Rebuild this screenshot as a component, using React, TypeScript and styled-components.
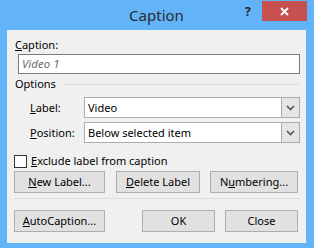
import React from "react";
import styled, { createGlobalStyle } from "styled-components";

const Global = createGlobalStyle`
  html, body { margin: 0; padding: 0; }
  body { width: 314px; height: 248px; overflow: hidden; font-family: "Segoe UI", "Noto Sans", "Open Sans", sans-serif; }
`;

const Window = styled.div`
  width: 314px;
  height: 248px;
  background: #63b3f9;
  display: flex;
  flex-direction: column;
  box-sizing: border-box;
  padding: 0 8px 5px 7px;
`;

const TitleBar = styled.div`
  height: 30px;
  position: relative;
  display: flex;
  align-items: flex-start;
  justify-content: center;
`;

const Title = styled.div`
  margin-top: 5px;
  margin-left: 0;
  font-family: "Segoe UI", "Noto Sans", sans-serif;
  font-size: 15px;
  color: #2b2b2b;
  line-height: 20px;
`;

const HelpMark = styled.div`
  position: absolute;
  left: 238px;
  top: 3px;
  font-family: "Noto Sans", sans-serif;
  font-weight: 700;
  font-size: 12px;
  color: #222;
`;

const CloseBtn = styled.div`
  position: absolute;
  left: 255px;
  top: 1px;
  width: 45px;
  height: 20px;
  background: #c75050;
  display: flex;
  align-items: center;
  justify-content: center;
`;

const Client = styled.div`
  flex: 1;
  background: #f0f0f0;
  box-sizing: border-box;
  padding: 7px 6px 0 7px;
  font-size: 11px;
  line-height: 16px;
  color: #000;
  display: flex;
  flex-direction: column;
`;

const FieldLabel = styled.div`
  height: 16px;
  margin-left: 1px;
`;

const TextInput = styled.div`
  margin: 1px 0 0 4px;
  height: 20px;
  box-sizing: border-box;
  border: 1px solid #7a7a7a;
  background: #fff;
  padding-left: 3px;
  line-height: 18px;
  font-size: 11.5px;
  font-style: italic;
  color: #6d6d6d;
`;

const GroupHeader = styled.div`
  display: flex;
  align-items: center;
  margin-top: 2px;
  height: 16px;
  gap: 8px;
  margin-left: 1px;
`;

const GroupLine = styled.div`
  flex: 1;
  height: 1px;
  background: #dcdcdc;
`;

const SelectRow = styled.div<{ $top: number }>`
  display: flex;
  align-items: center;
  margin-top: ${(p) => p.$top}px;
  padding-left: 16px;
`;

const RowLabel = styled.div`
  width: 54px;
`;

const Select = styled.div`
  flex: 1;
  height: 21px;
  box-sizing: border-box;
  border: 1px solid #acacac;
  background: #fff;
  display: flex;
  align-items: stretch;
`;

const SelectText = styled.div`
  flex: 1;
  padding-left: 3px;
  line-height: 19px;
`;

const SelectArrow = styled.div`
  width: 17px;
  background: #e5e5e5;
  border-left: 1px solid #acacac;
  display: flex;
  align-items: center;
  justify-content: center;
`;

const CheckRow = styled.div`
  display: flex;
  align-items: center;
  gap: 4px;
  height: 16px;
  margin-top: 10px;
`;

const Box = styled.div`
  width: 13px;
  height: 13px;
  box-sizing: border-box;
  border: 1px solid #333;
  background: #fff;
`;

const ButtonRow = styled.div<{ $top: number }>`
  display: flex;
  margin-top: ${(p) => p.$top}px;
`;

const Button = styled.div<{ $w: number; $gap?: number }>`
  width: ${(p) => p.$w}px;
  margin-left: ${(p) => p.$gap ?? 0}px;
  height: 22px;
  box-sizing: border-box;
  border: 1px solid #adadad;
  background: #e1e1e1;
  text-align: center;
  line-height: 20px;
`;

const Separator = styled.div`
  height: 1px;
  background: #dcdcdc;
  margin-top: 5px;
`;

const U = styled.span`
  text-decoration: underline;
`;

const Chevron = () => (
  <svg width="9" height="6" viewBox="0 0 9 6">
    <path d="M1 1 L4.5 4.5 L8 1" stroke="#555" strokeWidth="1.6" fill="none" />
  </svg>
);

export default function App() {
  return (
    <>
      <Global />
      <Window>
        <TitleBar>
          <Title>Caption</Title>
          <HelpMark>?</HelpMark>
          <CloseBtn>
            <svg width="9" height="9" viewBox="0 0 9 9">
              <path d="M1 1 L8 8 M8 1 L1 8" stroke="#fff" strokeWidth="1.8" />
            </svg>
          </CloseBtn>
        </TitleBar>
        <Client>
          <FieldLabel>
            <U>C</U>aption:
          </FieldLabel>
          <TextInput>Video 1</TextInput>
          <GroupHeader>
            Options
            <GroupLine />
          </GroupHeader>
          <SelectRow $top={5}>
            <RowLabel>
              <U>L</U>abel:
            </RowLabel>
            <Select>
              <SelectText>Video</SelectText>
              <SelectArrow>
                <Chevron />
              </SelectArrow>
            </Select>
          </SelectRow>
          <SelectRow $top={4}>
            <RowLabel>
              <U>P</U>osition:
            </RowLabel>
            <Select>
              <SelectText>Below selected item</SelectText>
              <SelectArrow>
                <Chevron />
              </SelectArrow>
            </Select>
          </SelectRow>
          <CheckRow>
            <Box />
            <span>
              <U>E</U>xclude label from caption
            </span>
          </CheckRow>
          <ButtonRow $top={2}>
            <Button $w={91}>
              <U>N</U>ew Label...
            </Button>
            <Button $w={84} $gap={11}>
              <U>D</U>elete Label
            </Button>
            <Button $w={88} $gap={10}>
              N<U>u</U>mbering...
            </Button>
          </ButtonRow>
          <Separator />
          <ButtonRow $top={11}>
            <Button $w={91}>
              <U>A</U>utoCaption...
            </Button>
            <Button $w={73} $gap={37}>
              OK
            </Button>
            <Button $w={73} $gap={10}>
              Close
            </Button>
          </ButtonRow>
        </Client>
      </Window>
    </>
  );
}
